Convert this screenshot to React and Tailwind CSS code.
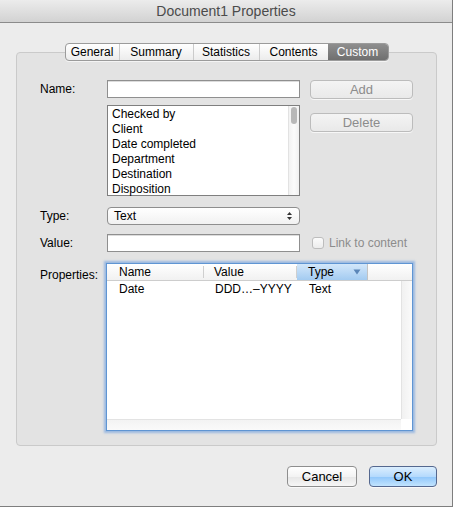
import React from 'react';

// Mac OS X style "Document Properties" sheet, Custom tab

const tabs = [
  { label: 'General', w: 'w-[54px]' },
  { label: 'Summary', w: 'w-[74px]' },
  { label: 'Statistics', w: 'w-[66px]' },
  { label: 'Contents', w: 'w-[68px]' },
  { label: 'Custom', w: 'w-[60px]' },
];
const fields = ['Checked by', 'Client', 'Date completed', 'Department', 'Destination', 'Disposition'];

function Tabs() {
  return (
    <div className="relative z-10 flex justify-center h-[18px]">
      <div className="flex h-[18px] rounded-[4px] border border-[#9b9b9b] bg-[linear-gradient(#ffffff,#ececec)] shadow-[0_1px_0_rgba(255,255,255,0.6)] overflow-hidden">
        {tabs.map((t, i) => {
          const active = t.label === 'Custom';
          return (
            <div
              key={t.label}
              className={
                active
                  ? `${t.w} flex items-center justify-center text-white bg-[linear-gradient(#8e8e8e,#6f6f6f)] text-[12px]`
                  : `${t.w} flex items-center justify-center text-black text-[12px] ` + (i < 3 ? 'border-r border-[#cbcbcb]' : '')
              }
            >
              {t.label}
            </div>
          );
        })}
      </div>
    </div>
  );
}

function Button({ children, disabled, primary, className = '' }) {
  let look = 'border-[#8e8e8e] bg-[linear-gradient(#ffffff,#f3f3f3_50%,#e6e6e6_51%,#f6f6f6)] text-black';
  if (disabled) look = 'border-[#bcbcbc] bg-[linear-gradient(#f4f4f4,#e9e9e9)] text-[#8c8c8c]';
  if (primary) look = 'border-[#55688f] bg-[linear-gradient(#dbeefe,#b5dafd_50%,#8fc6fb_51%,#c2e4fe)] text-black';
  return (
    <div className={`flex items-center justify-center rounded-[4px] border text-[13px] shadow-[0_1px_0_rgba(255,255,255,0.7)] ${look} ${className}`}>
      {children}
    </div>
  );
}

function Label({ children }) {
  return <div className="w-[67px] shrink-0 text-[12px] text-black">{children}</div>;
}

export default function App() {
  return (
    <div className="w-[453px] h-[507px] flex flex-col bg-[#ececec] border-r border-b border-[#7e7e7e] overflow-hidden font-['Lucida_Grande','Liberation_Sans',sans-serif] text-[12px] text-black">
      {/* title bar */}
      <div className="h-[23px] shrink-0 flex items-center justify-center bg-[linear-gradient(#ececec,#d2d2d2)] border-b border-[#8b8b8b] text-[14px] text-[#4b4b4b]">
        Document1 Properties
      </div>

      <div className="pl-[16px] pr-[15px] pt-[20px]">
        <Tabs />
        <div className="-mt-[9px] h-[394px] rounded-[4px] border border-[#cacaca] bg-[#e3e3e3] pl-[23px] pt-[27px]">
          {/* Name */}
          <div className="flex items-start">
            <Label><div className="h-[18px] flex items-center">Name:</div></Label>
            <div className="w-[193px] h-[18px] border border-[#8f8f8f] bg-white shadow-[inset_0_1px_0_#dcdcdc]" />
            <Button disabled className="ml-[10px] w-[103px] h-[19px]">Add</Button>
          </div>

          {/* list of field names */}
          <div className="flex items-start mt-[6px]">
            <Label />
            <div className="w-[193px] h-[91px] flex border border-[#7f7f7f] bg-white">
              <div className="flex-1 pl-[4px] pt-[1px]">
                {fields.map((f) => (
                  <div key={f} className="h-[15px] leading-[15px]">{f}</div>
                ))}
              </div>
              <div className="w-[11px] border-l border-[#e2e2e2] bg-[linear-gradient(90deg,#f2f2f2,#fbfbfb,#f0f0f0)] pt-[1px] flex justify-center">
                <div className="w-[6px] h-[17px] rounded-full bg-[#b8b8b8]" />
              </div>
            </div>
            <Button disabled className="ml-[10px] mt-[8px] w-[103px] h-[19px]">Delete</Button>
          </div>

          {/* Type */}
          <div className="flex items-center mt-[11px]">
            <Label>Type:</Label>
            <div className="w-[193px] h-[18px] flex items-center justify-between rounded-[4px] border border-[#8e8e8e] bg-[linear-gradient(#ffffff,#f1f1f1)] pl-[6px] pr-[6px]">
              <span>Text</span>
              <svg width="7" height="10" viewBox="0 0 7 10">
                <path d="M3.5 1 L6 4 L1 4 Z" fill="#333" />
                <path d="M3.5 9 L6 6 L1 6 Z" fill="#333" />
              </svg>
            </div>
          </div>

          {/* Value */}
          <div className="flex items-center mt-[9px]">
            <Label>Value:</Label>
            <div className="w-[193px] h-[18px] border border-[#8f8f8f] bg-white shadow-[inset_0_1px_0_#dcdcdc]" />
            <div className="ml-[12px] flex items-center">
              <div className="w-[12px] h-[12px] rounded-[3px] border border-[#bdbdbd] bg-[linear-gradient(#fbfbfb,#ececec)]" />
              <span className="ml-[5px] text-[#8c8c8c]">Link to content</span>
            </div>
          </div>

          {/* Properties table */}
          <div className="flex items-start mt-[11px]">
            <Label><div className="pt-[3px]">Properties:</div></Label>
            <div className="-ml-[1px] w-[307px] h-[168px] flex flex-col border border-[#5f95d3] bg-white shadow-[0_0_2px_2px_rgba(96,152,222,0.55)]">
              <div className="h-[17px] shrink-0 flex border-b border-[#cdcdcd] bg-[linear-gradient(#ffffff,#f1f1f1)]">
                <div className="w-[97px] pl-[12px] flex items-center border-r border-[#cfcfcf] my-[2px]">Name</div>
                <div className="w-[93px] pl-[10px] flex items-center border-r border-[#cfcfcf] my-[2px]">Value</div>
                <div className="w-[71px] pl-[11px] pr-[6px] flex items-center justify-between bg-[linear-gradient(#d3e7fa,#a3cbf1)] border-r border-[#c3c3c3]">
                  <span>Type</span>
                  <svg width="8" height="6" viewBox="0 0 8 6">
                    <path d="M0.5 0.5 L7.5 0.5 L4 5.5 Z" fill="#5b86b8" />
                  </svg>
                </div>
                <div className="flex-1" />
              </div>
              <div className="flex-1 flex">
                <div className="flex-1 flex flex-col">
                  <div className="flex-1">
                    <div className="h-[16px] flex items-center">
                      <div className="w-[97px] pl-[12px]">Date</div>
                      <div className="w-[93px] pl-[11px]">DDD…–YYYY</div>
                      <div className="w-[71px] pl-[12px]">Text</div>
                    </div>
                  </div>
                  <div className="h-[11px] border-t border-[#e3e3e3] bg-[linear-gradient(#f3f3f3,#fafafa)]" />
                </div>
                <div className="w-[11px] flex flex-col">
                  <div className="flex-1 border-l border-[#e3e3e3] bg-[linear-gradient(90deg,#f1f1f1,#fafafa)]" />
                  <div className="h-[11px] bg-white" />
                </div>
              </div>
            </div>
          </div>
        </div>
      </div>

      {/* bottom buttons */}
      <div className="flex justify-end gap-[12px] pr-[15px] mt-[20px]">
        <Button className="w-[70px] h-[21px]">Cancel</Button>
        <Button primary className="w-[68px] h-[21px]">OK</Button>
      </div>
    </div>
  );
}
